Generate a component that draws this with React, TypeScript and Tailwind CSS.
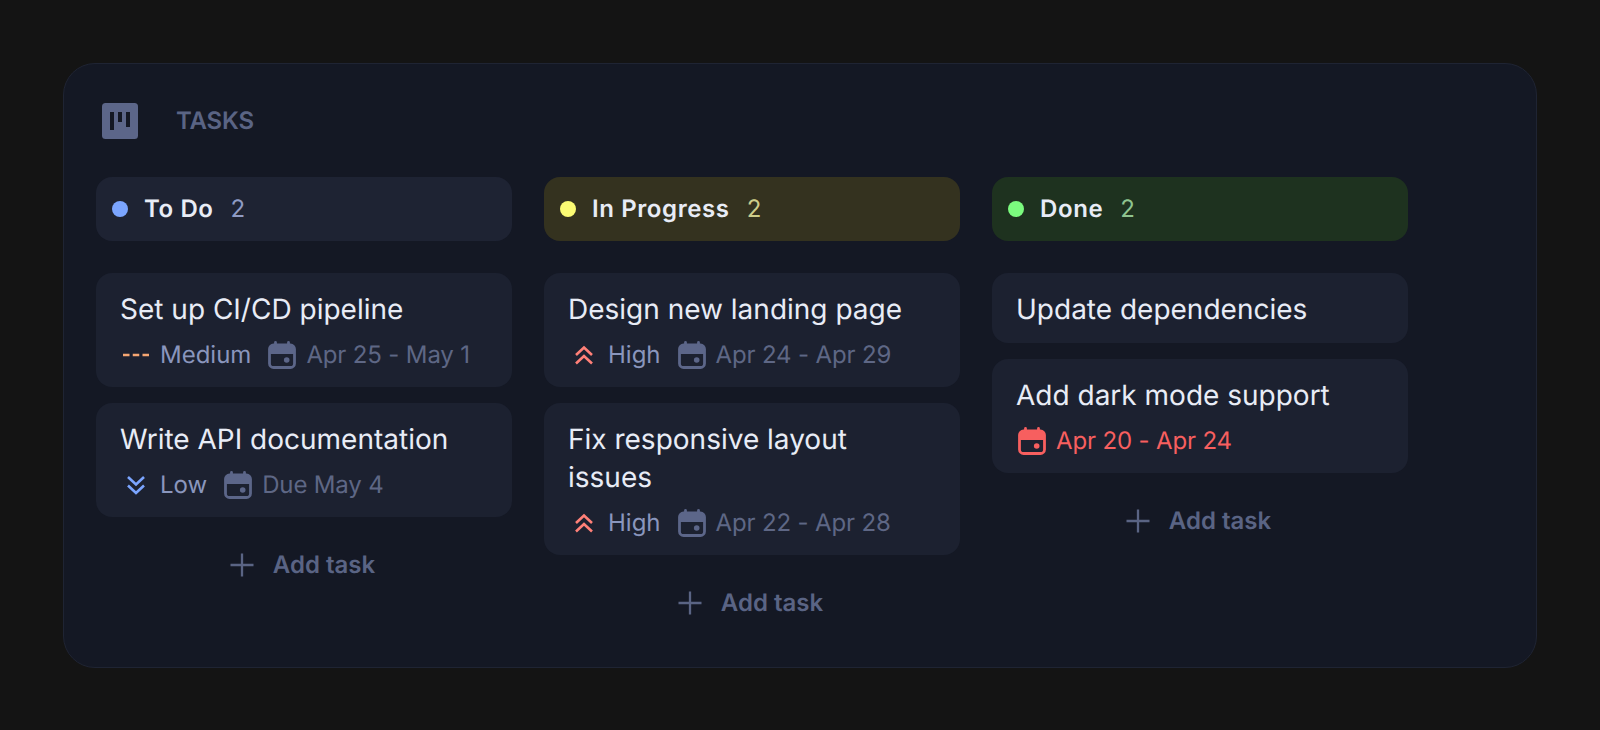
type Priority = "high" | "medium" | "low";

interface Task {
  title: string;
  priority?: Priority;
  date: string;
  overdue?: boolean;
}

function KanbanLogo() {
  return (
    <svg viewBox="0 0 36 36" className="w-9 h-9">
      <rect width="36" height="36" rx="3.500" fill="#5c6689" />
      <path d="M8 9h4v18H8zM16 9h4v10h-4zM24 9h4v15h-4z" fill="#141824" />
    </svg>
  );
}

function CalendarIcon({ color }: { color: string }) {
  return (
    <svg viewBox="0 0 32 32" className="w-8 h-8 shrink-0" fill="none">
      <path d="M9.500 3.500v4M22.500 3.500v4" stroke={color} strokeWidth="2.800" strokeLinecap="round" />
      <rect x="3.500" y="6" width="25" height="22.500" rx="4" stroke={color} strokeWidth="2.800" />
      <path d="M3.500 10a4 4 0 0 1 4-4h17a4 4 0 0 1 4 4v5H3.500z" fill={color} />
      <circle cx="20.700" cy="21" r="2.800" fill={color} />
    </svg>
  );
}

function PriorityIcon({ priority }: { priority: Priority }) {
  if (priority === "high") {
    return (
      <svg viewBox="0 0 32 32" className="w-8 h-8 shrink-0" fill="none">
        <path d="M8 16l8-7.500 8 7.500M8 24.500l8-7.500 8 7.500" stroke="#ff8078" strokeWidth="2.600" />
      </svg>
    );
  }
  if (priority === "low") {
    return (
      <svg viewBox="0 0 32 32" className="w-8 h-8 shrink-0" fill="none">
        <path d="M8 8l8 7.500 8-7.500M8 16.500l8 7.500 8-7.500" stroke="#7ba5ff" strokeWidth="2.600" />
      </svg>
    );
  }
  return (
    <svg viewBox="0 0 32 32" className="w-8 h-8 shrink-0" fill="none">
      <path d="M3 16h6.500M12.750 16h6.500M22.500 16h6.500" stroke="#f5a672" strokeWidth="2.400" />
    </svg>
  );
}

const priorityLabel: Record<Priority, string> = {
  high: "High",
  medium: "Medium",
  low: "Low",
};

function TaskCard({ task }: { task: Task }) {
  return (
    <div className="bg-[#1c2130] rounded-2xl px-6 pt-[17px] pb-[15px]">
      <div className="text-[28px] leading-[38px] font-normal text-[#e8ecf6]">{task.title}</div>
      {task.date && (
        <div className="flex items-center h-9 mt-[9px] -mb-px text-[24px]">
          {task.priority && (
            <div className="flex items-center gap-2 mr-[15px] text-[#8a96bd]">
              <PriorityIcon priority={task.priority} />
              <span>{priorityLabel[task.priority]}</span>
            </div>
          )}
          <div className={`flex items-center gap-2 tracking-[-0.15px] ${task.overdue ? "text-[#f75f5f]" : "text-[#5e6785]"}`}>
            <CalendarIcon color={task.overdue ? "#f75f5f" : "#5c6689"} />
            <span>{task.date}</span>
          </div>
        </div>
      )}
    </div>
  );
}

function AddTask() {
  return (
    <div className="flex items-center justify-center gap-[13px] h-16 mt-4 pr-[9px] text-[24px] font-semibold text-[#5a6484]">
      <svg viewBox="0 0 36 36" className="w-9 h-9" fill="none">
        <path d="M18 6.500v23M6.500 18h23" stroke="#5a6484" strokeWidth="2.300" />
      </svg>
      <span>Add task</span>
    </div>
  );
}

const columns = [
  {
    name: "To Do",
    dot: "bg-[#7ba5ff]",
    head: "bg-[#1e2333]",
    count: "text-[#8f9bc4]",
    tasks: [
      { title: "Set up CI/CD pipeline", priority: "medium", date: "Apr 25 - May 1" },
      { title: "Write API documentation", priority: "low", date: "Due May 4" },
    ] as Task[],
  },
  {
    name: "In Progress",
    dot: "bg-[#fbfb73]",
    head: "bg-[#34321f]",
    count: "text-[#cdcd8a]",
    tasks: [
      { title: "Design new landing page", priority: "high", date: "Apr 24 - Apr 29" },
      { title: "Fix responsive layout issues", priority: "high", date: "Apr 22 - Apr 28" },
    ] as Task[],
  },
  {
    name: "Done",
    dot: "bg-[#7bfb7e]",
    head: "bg-[#1e321f]",
    count: "text-[#8fc48f]",
    tasks: [
      { title: "Update dependencies", date: "" },
      { title: "Add dark mode support", date: "Apr 20 - Apr 24", overdue: true },
    ] as Task[],
  },
];

export default function App() {
  return (
    <div className="min-h-[730px] bg-[#141414] p-16 pb-0 font-['Inter',sans-serif] [text-rendering:geometricPrecision]">
      <div className="bg-[#141824] border border-[#1f2433] rounded-[32px] p-8 pt-[33px] -m-px">
        <div className="flex items-center gap-8 h-12">
          <div className="w-12 h-12 flex items-center justify-center">
            <KanbanLogo />
          </div>
          <div className="text-[24px] font-semibold tracking-[-0.2px] text-[#5a6484]">TASKS</div>
        </div>
        <div className="flex items-start gap-8 mt-8">
          {columns.map((col) => (
            <div key={col.name} className="w-[416px]">
              <div className={`flex items-center h-16 px-4 rounded-2xl ${col.head}`}>
                <div className={`w-4 h-4 rounded-full ${col.dot}`} />
                <span className="ml-4 text-[24px] font-semibold tracking-[0.6px] text-[#e8ecf6]">{col.name}</span>
                <span className={`ml-[17px] text-[24px] ${col.count}`}>2</span>
              </div>
              <div className="flex flex-col gap-4 mt-8">
                {col.tasks.map((task) => (
                  <TaskCard key={task.title} task={task} />
                ))}
              </div>
              <AddTask />
            </div>
          ))}
        </div>
      </div>
    </div>
  );
}
